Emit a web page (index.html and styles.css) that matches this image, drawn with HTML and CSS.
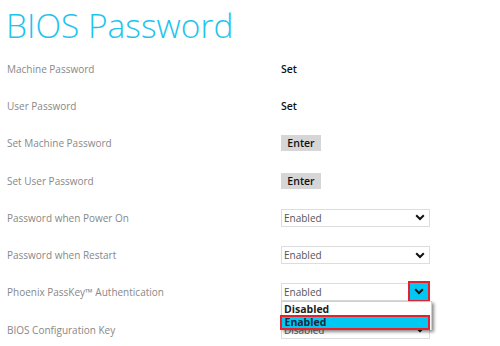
FILE: index.html
```html
<!DOCTYPE html>
<html>
<head>
<meta charset="utf-8">
<link rel="stylesheet" href="styles.css">
</head>
<body>
<h1 class="title">BIOS Password</h1>
<div class="rows">
  <div class="row"><span class="label">Machine Password</span><span class="value">Set</span></div>
  <div class="row"><span class="label">User Password</span><span class="value">Set</span></div>
  <div class="row"><span class="label">Set Machine Password</span><span class="btn">Enter</span></div>
  <div class="row"><span class="label">Set User Password</span><span class="btn">Enter</span></div>
  <div class="row"><span class="label">Password when Power On</span>
    <div class="select"><span class="sel-text">Enabled</span><span class="arrow"><svg width="10" height="7" viewBox="0 0 10 7"><polyline points="1.2,1.2 5,5 8.8,1.2" fill="none" stroke="#111" stroke-width="2"/></svg></span></div></div>
  <div class="row"><span class="label">Password when Restart</span>
    <div class="select"><span class="sel-text">Enabled</span><span class="arrow"><svg width="10" height="7" viewBox="0 0 10 7"><polyline points="1.2,1.2 5,5 8.8,1.2" fill="none" stroke="#111" stroke-width="2"/></svg></span></div></div>
  <div class="row"><span class="label">Phoenix PassKey™ Authentication</span>
    <div class="select open"><span class="sel-text">Enabled</span><span class="arrow active"><svg width="10" height="7" viewBox="0 0 10 7"><polyline points="1.2,1.2 5,5 8.8,1.2" fill="none" stroke="#111" stroke-width="2"/></svg></span>
      <div class="menu">
        <div class="opt">Disabled</div>
        <div class="opt hl">Enabled</div>
      </div>
    </div></div>
  <div class="row"><span class="label">BIOS Configuration Key</span>
    <div class="select"><span class="sel-text">Disabled</span><span class="arrow"><svg width="10" height="7" viewBox="0 0 10 7"><polyline points="1.2,1.2 5,5 8.8,1.2" fill="none" stroke="#111" stroke-width="2"/></svg></span></div></div>
</div>
</body>
</html>
```
FILE: styles.css
```css
html, body { margin: 0; padding: 0; background: #fff; }
body { font-family: "Open Sans", "Noto Sans", sans-serif; width: 500px; height: 346px; overflow: hidden; }
.title {
  margin: 0;
  padding: 4px 0 0 6px;
  height: 46px;
  box-sizing: border-box;
  font-weight: 300;
  font-size: 33.5px;
  line-height: 42px;
  color: #1ec4ee;
  letter-spacing: 0;
  white-space: nowrap;
}
.rows { display: flex; flex-direction: column; margin-top: 4px; }
.row {
  height: 37.3px;
  display: grid;
  grid-template-columns: 281px 149px;
  align-items: center;
}
.label { padding-left: 7px; font-size: 10px; color: #888; }
.value { font-size: 10.5px; font-weight: 600; color: #111; }
.btn {
  width: 40px; height: 16px;
  background: #d6d6d6;
  font-size: 10.5px; font-weight: 600; color: #111;
  display: flex; align-items: center; justify-content: center;
}
.select {
  position: relative;
  height: 18px;
  box-sizing: border-box;
  border: 1px solid #ddd;
  display: flex; align-items: center; justify-content: space-between;
  padding-left: 2px;
}
.sel-text { font-size: 10px; color: #555; }
.arrow { width: 18px; height: 16px; display: flex; align-items: center; justify-content: center; }
.arrow.active {
  position: absolute; right: -1px; top: -3px;
  width: 22px; height: 21px; box-sizing: border-box;
  background: #00c8f2; border: 2.5px solid #e8202c;
}
.menu {
  position: absolute; left: -1px; top: 17px;
  width: 149px;
  background: #fff;
  border: 1px solid #cfcfcf;
  border-bottom: none;
  box-shadow: 2px 2px 3px rgba(0,0,0,0.45);
  z-index: 2;
  padding-top: 1px;
}
.opt { font-size: 10.5px; font-weight: 700; color: #222; height: 12px; line-height: 12px; padding-left: 2px; }
.opt.hl {
  background: #00c8f2; color: #1a2a40;
  border: 2.5px solid #e8202c;
  height: 15px; line-height: 10px; box-sizing: border-box;
  margin: 0 0 0 -2px; width: 150px;
  padding-left: 2.5px;
}
```
